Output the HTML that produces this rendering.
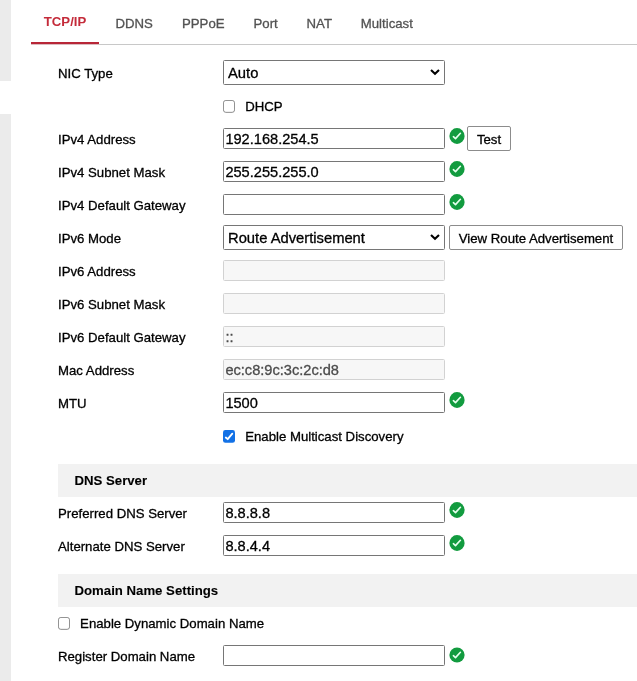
<!DOCTYPE html>
<html lang="en">
<head>
<meta charset="utf-8">
<title>TCP/IP</title>
<style>
*{box-sizing:border-box;margin:0;padding:0}
html,body{width:637px;height:681px;overflow:hidden;background:#fff}
body{position:relative;font-family:"Liberation Sans",sans-serif;font-size:13.2px;color:#000;-webkit-text-stroke:0.3px}
.wrap{position:absolute;left:0;top:0;width:637px;height:681px;will-change:transform}
.side{position:absolute;left:0;width:11px;background:#ebebeb}
.tabs{position:absolute;left:31px;right:0;top:0;height:45px;border-bottom:1px solid #c8c8c8}
.tab{position:absolute;top:0;height:45px;line-height:48px;padding:0 13px;color:#525252;font-size:13.2px;white-space:nowrap}
.tab.act{color:#c42b3a;font-weight:bold;-webkit-text-stroke:0;width:68px;padding:0;text-align:center;height:45px;line-height:43px}
.tab.act:after{content:"";position:absolute;left:0;right:0;top:42px;height:2px;background:#b82637}
.tab.act:before{content:"";position:absolute;left:0;right:0;top:44px;height:1px;background:#dcbcc0}
.lb{position:absolute;height:16px;line-height:16px;white-space:nowrap;font-size:13.2px}
.in{position:absolute;left:223px;width:222px;height:21px;border:1px solid #767676;border-radius:1.5px;background:#fff;font-size:14.6px;line-height:20px;padding:0 0 0 1.4px;white-space:nowrap;overflow:hidden}
.in.dis{border-color:#d2d2d2;background:#f7f7f7;color:#4c4c4c}
.sel{position:absolute;left:223px;width:222px;height:24.5px;border:1px solid #767676;border-radius:1.5px;background:#fff;font-size:14.75px;line-height:24.5px;padding-left:4px;white-space:nowrap}
.sel svg{position:absolute;left:205px;top:7px}
.ok{position:absolute}
.btn{position:absolute;height:25px;border:1px solid #8c8c8c;border-radius:2px;background:#fff;text-align:center;font-size:13.2px;line-height:25px;white-space:nowrap}
.cb{position:absolute}
.band{-webkit-text-stroke:0.1px;position:absolute;left:58px;right:0;height:33px;background:#f2f2f2;font-weight:bold;font-size:13.2px;line-height:33px;padding-left:16.5px}
</style>
</head>
<body>
<div class="wrap">
<div class="side" style="top:0;height:81px"></div>
<div class="side" style="top:114px;height:567px"></div>
<div class="tabs">
<div class="tab act" style="left:0">TCP/IP</div>
<div class="tab" style="left:71.5px">DDNS</div>
<div class="tab" style="left:138px">PPPoE</div>
<div class="tab" style="left:209.5px">Port</div>
<div class="tab" style="left:262.6px">NAT</div>
<div class="tab" style="left:316.8px">Multicast</div>
</div>
<div class="lb" style="left:58px;top:66px">NIC Type</div>
<div class="sel" style="top:60px">Auto<svg width="12" height="8" viewBox="0 0 12 8"><path d="M2 1.9 L6 5.7 L10 1.9" fill="none" stroke="#000" stroke-width="2.1" stroke-linecap="butt" stroke-linejoin="miter"/></svg></div>
<svg class="cb" style="left:223.1px;top:100.1px" width="12" height="12.8" viewBox="0 0 12 12.8"><rect x="0.45" y="0.45" width="11.1" height="11.9" rx="2.4" fill="#fff" stroke="#808080" stroke-width="0.9"/></svg>
<div class="lb" style="left:245.2px;top:99px">DHCP</div>
<div class="lb" style="left:58px;top:132px">IPv4 Address</div>
<div class="in" style="top:128px">192.168.254.5</div>
<svg class="ok" style="left:449.2px;top:127.85px" width="16" height="16" viewBox="0 0 16 16"><ellipse cx="8" cy="8" rx="7.6" ry="7.95" fill="#129b3f"/><path d="M4.4 8.7 L6.5 10.6 L11.4 5.3" fill="none" stroke="#e6ffee" stroke-width="1.65" stroke-linecap="round" stroke-linejoin="round"/></svg>
<div class="btn" style="left:467px;top:126px;width:44px">Test</div>
<div class="lb" style="left:58px;top:165px">IPv4 Subnet Mask</div>
<div class="in" style="top:161px">255.255.255.0</div>
<svg class="ok" style="left:449.2px;top:160.85px" width="16" height="16" viewBox="0 0 16 16"><ellipse cx="8" cy="8" rx="7.6" ry="7.95" fill="#129b3f"/><path d="M4.4 8.7 L6.5 10.6 L11.4 5.3" fill="none" stroke="#e6ffee" stroke-width="1.65" stroke-linecap="round" stroke-linejoin="round"/></svg>
<div class="lb" style="left:58px;top:198px">IPv4 Default Gateway</div>
<div class="in" style="top:194px"></div>
<svg class="ok" style="left:449.2px;top:193.85px" width="16" height="16" viewBox="0 0 16 16"><ellipse cx="8" cy="8" rx="7.6" ry="7.95" fill="#129b3f"/><path d="M4.4 8.7 L6.5 10.6 L11.4 5.3" fill="none" stroke="#e6ffee" stroke-width="1.65" stroke-linecap="round" stroke-linejoin="round"/></svg>
<div class="lb" style="left:58px;top:231px">IPv6 Mode</div>
<div class="sel" style="top:225px">Route Advertisement<svg width="12" height="8" viewBox="0 0 12 8"><path d="M2 1.9 L6 5.7 L10 1.9" fill="none" stroke="#000" stroke-width="2.1" stroke-linecap="butt" stroke-linejoin="miter"/></svg></div>
<div class="btn" style="left:449px;top:225px;width:174px">View Route Advertisement</div>
<div class="lb" style="left:58px;top:264px">IPv6 Address</div>
<div class="in dis" style="top:260px"></div>
<div class="lb" style="left:58px;top:297px">IPv6 Subnet Mask</div>
<div class="in dis" style="top:293px"></div>
<div class="lb" style="left:58px;top:330px">IPv6 Default Gateway</div>
<div class="in dis" style="top:326px">::</div>
<div class="lb" style="left:58px;top:363px">Mac Address</div>
<div class="in dis" style="top:359px">ec:c8:9c:3c:2c:d8</div>
<div class="lb" style="left:58px;top:396px">MTU</div>
<div class="in" style="top:392px">1500</div>
<svg class="ok" style="left:449.2px;top:391.85px" width="16" height="16" viewBox="0 0 16 16"><ellipse cx="8" cy="8" rx="7.6" ry="7.95" fill="#129b3f"/><path d="M4.4 8.7 L6.5 10.6 L11.4 5.3" fill="none" stroke="#e6ffee" stroke-width="1.65" stroke-linecap="round" stroke-linejoin="round"/></svg>
<svg class="cb" style="left:223.1px;top:430.1px" width="12" height="12.8" viewBox="0 0 12 12.8"><rect x="0" y="0" width="12" height="12.8" rx="2.4" fill="#1271e6"/><path d="M2.8 7.5 L4.7 9.2 L9.3 3.7" fill="none" stroke="#fff" stroke-width="1.8" stroke-linecap="round" stroke-linejoin="round"/></svg>
<div class="lb" style="left:245.2px;top:429px">Enable Multicast Discovery</div>
<div class="band" style="top:464px">DNS Server</div>
<div class="lb" style="left:58px;top:506px">Preferred DNS Server</div>
<div class="in" style="top:502px">8.8.8.8</div>
<svg class="ok" style="left:449.2px;top:501.85px" width="16" height="16" viewBox="0 0 16 16"><ellipse cx="8" cy="8" rx="7.6" ry="7.95" fill="#129b3f"/><path d="M4.4 8.7 L6.5 10.6 L11.4 5.3" fill="none" stroke="#e6ffee" stroke-width="1.65" stroke-linecap="round" stroke-linejoin="round"/></svg>
<div class="lb" style="left:58px;top:539px">Alternate DNS Server</div>
<div class="in" style="top:535px">8.8.4.4</div>
<svg class="ok" style="left:449.2px;top:534.85px" width="16" height="16" viewBox="0 0 16 16"><ellipse cx="8" cy="8" rx="7.6" ry="7.95" fill="#129b3f"/><path d="M4.4 8.7 L6.5 10.6 L11.4 5.3" fill="none" stroke="#e6ffee" stroke-width="1.65" stroke-linecap="round" stroke-linejoin="round"/></svg>
<div class="band" style="top:574px">Domain Name Settings</div>
<svg class="cb" style="left:58.3px;top:617.1px" width="12" height="12.8" viewBox="0 0 12 12.8"><rect x="0.45" y="0.45" width="11.1" height="11.9" rx="2.4" fill="#fff" stroke="#808080" stroke-width="0.9"/></svg>
<div class="lb" style="left:80.1px;top:616px">Enable Dynamic Domain Name</div>
<div class="lb" style="left:58px;top:649px">Register Domain Name</div>
<div class="in" style="top:645px"></div>
<svg class="ok" style="left:449.2px;top:646.85px" width="16" height="16" viewBox="0 0 16 16"><ellipse cx="8" cy="8" rx="7.6" ry="7.5" fill="#129b3f"/><path d="M4.4 8.7 L6.5 10.6 L11.4 5.3" fill="none" stroke="#e6ffee" stroke-width="1.65" stroke-linecap="round" stroke-linejoin="round"/></svg>
</div>
</body>
</html>
